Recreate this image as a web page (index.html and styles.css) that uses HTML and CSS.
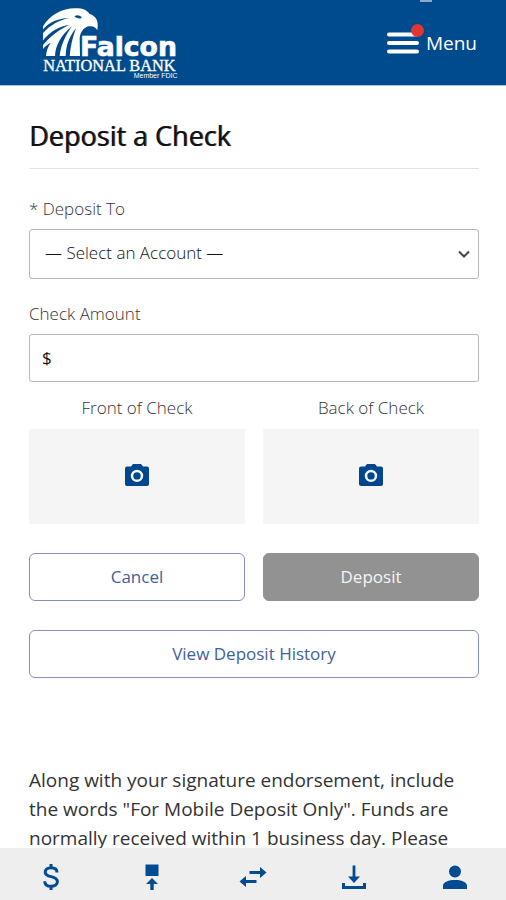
FILE: index.html
```html
<!DOCTYPE html>
<html lang="en">
<head>
<meta charset="utf-8">
<meta name="viewport" content="width=device-width, initial-scale=1">
<title>Deposit a Check</title>
<link rel="stylesheet" href="styles.css">
</head>
<body>
<div class="app">
  <header class="topbar">
    <svg class="logo" viewBox="36 18 411 219" role="img" aria-label="Falcon National Bank">
      <path class="logo-fill" d="M39 76C58 42 100 20 140 22C158 22 170 27 178 38C198 44 207 60 202 88C196 77 188 74 176 76C162 80 151 92 149 112L150 165L48 165C49 150 54 137 62 126C53 130 46 136 39 144Z"/>
      <path class="logo-cut" d="M37 88C56 64 82 52 118 51C90 57 62 70 37 98ZM37 121C60 90 88 75 120 71C92 83 64 102 37 134ZM75 166C76 134 92 104 126 76C106 104 92 134 89 166ZM107 166C108 132 118 106 138 82C128 108 121 138 119 166ZM133 46C142 40 152 44 156 51C148 54 139 52 133 46Z"/>
      <text class="logo-name" x="150" y="164">Falcon</text>
      <text class="logo-bank" x="40" y="209">NATIONAL BANK</text>
      <text class="logo-fdic" x="311" y="231">Member FDIC</text>
    </svg>
    <span class="top-mark" aria-hidden="true"></span>
    <button class="menu" type="button">
      <span class="menu-icon">
        <svg viewBox="0 0 32 22" aria-hidden="true"><path d="M2 2.500H30M2 11H30M2 19.500H30"/></svg>
        <span class="menu-dot"></span>
      </span>
      Menu
    </button>
  </header>

  <main class="content">
    <h1>Deposit a Check</h1>
    <form class="form">
      <label class="label" for="account">* Deposit To</label>
      <div class="select-wrap">
        <select id="account"><option>— Select an Account —</option></select>
        <svg class="chevron" viewBox="0 0 12 8" aria-hidden="true"><path d="M1 1.500L6 6.500L11 1.500"/></svg>
      </div>
      <label class="label" for="amount">Check Amount</label>
      <div class="amount">
        <span>$</span>
        <input id="amount" type="text" inputmode="decimal">
      </div>
      <div class="pair photos">
        <div class="photo">
          <span id="front">Front of Check</span>
          <button type="button" aria-labelledby="front">
            <svg viewBox="0 0 24 22" aria-hidden="true"><path fill-rule="evenodd" d="M8 0H16L18 2.500H22Q24 2.500 24 4.500V20Q24 22 22 22H2Q0 22 0 20V4.500Q0 2.500 2 2.500H6ZM12 5.700A6.200 6.200 0 1 0 12 18.100A6.200 6.200 0 1 0 12 5.700ZM12 8.200A3.700 3.700 0 1 1 12 15.600A3.700 3.700 0 1 1 12 8.200Z"/></svg>
          </button>
        </div>
        <div class="photo">
          <span id="back">Back of Check</span>
          <button type="button" aria-labelledby="back">
            <svg viewBox="0 0 24 22" aria-hidden="true"><path fill-rule="evenodd" d="M8 0H16L18 2.500H22Q24 2.500 24 4.500V20Q24 22 22 22H2Q0 22 0 20V4.500Q0 2.500 2 2.500H6ZM12 5.700A6.200 6.200 0 1 0 12 18.100A6.200 6.200 0 1 0 12 5.700ZM12 8.200A3.700 3.700 0 1 1 12 15.600A3.700 3.700 0 1 1 12 8.200Z"/></svg>
          </button>
        </div>
      </div>
      <div class="pair actions">
        <button class="btn" type="button">Cancel</button>
        <button class="btn btn-muted" type="button">Deposit</button>
      </div>
      <button class="btn" type="button">View Deposit History</button>
    </form>
    <p class="note">Along with your signature endorsement, include the words "For Mobile Deposit Only". Funds are normally received within 1 business day. Please</p>
  </main>

  <nav class="tabs" aria-label="Main">
    <a href="#accounts" aria-label="Accounts"><svg viewBox="0 0 28 28"><path class="line" d="M14 1V5M14 23V27M20 9.500C20 6.500 17.500 4.800 14 4.800C10.500 4.800 8.200 6.600 8.200 9.200C8.200 15.300 20.400 12 20.400 18.600C20.400 21.500 17.800 23.300 14 23.300C10.200 23.300 7.800 21.300 7.700 18.200"/></svg></a>
    <a href="#deposit" aria-label="Deposit"><svg viewBox="0 0 28 28"><path d="M7.500 1.500H20.500V13H7.500ZM14 15L20 21H15.700V27H12.300V21H8Z"/></svg></a>
    <a href="#transfer" aria-label="Transfer"><svg viewBox="0 0 28 28"><path d="M10.500 8H21V4L27.500 9.500L21 15V11H10.500ZM17.500 17H7V13L.5 18.500L7 24V20H17.500Z"/></svg></a>
    <a href="#download" aria-label="Download"><svg viewBox="0 0 28 28"><path d="M12.600 2.500H15.400V13.500H20L14 20L8 13.500H12.600ZM2 20H5V23H23V20H26V26H2Z"/></svg></a>
    <a href="#profile" aria-label="Profile"><svg viewBox="0 0 28 28"><path d="M14 2.500A6 6 0 1 1 14 14.500A6 6 0 1 1 14 2.500ZM2 26V22.500C2 19 8 17 14 17S26 19 26 22.500V26Z"/></svg></a>
  </nav>
</div>
</body>
</html>
```
FILE: styles.css
```css
* { box-sizing: border-box; }

body {
  margin: 0;
  background: #fff;
  color: #333;
  font: 17px/24px "Open Sans", "Noto Sans", sans-serif;
}

button, input, select { font: inherit; color: inherit; }

button { cursor: pointer; }

.app {
  display: flex;
  flex-direction: column;
  height: 100vh;
}

.topbar {
  position: relative;
  display: flex;
  flex: none;
  align-items: center;
  justify-content: space-between;
  height: 86px;
  padding: 1px 29px 0 42px;
  background: #004b8d;
  border-bottom: 1px solid #b4bfd8;
}

.logo { width: 137px; height: 73px; }
.logo-fill, .logo text { fill: #fff; }
.logo-cut { fill: #004b8d; }
.logo-name { font: bold 80px "DejaVu Sans", Verdana, sans-serif; stroke: #fff; stroke-width: 2px; }
.logo-bank { font: 49px "Liberation Serif", serif; stroke: #fff; stroke-width: 1px; }
.logo-fdic { font: 21px "Liberation Sans", Arial, sans-serif; }

.top-mark {
  position: absolute;
  top: 0;
  right: 74px;
  width: 12px;
  height: 2px;
  background: #8fa9cb;
}

.menu {
  display: flex;
  align-items: center;
  gap: 7px;
  padding: 0;
  border: 0;
  background: none;
  color: #fff;
  font-size: 19px;
}

.menu-icon { position: relative; display: flex; }
.menu-icon svg { width: 32px; height: 22px; fill: none; stroke: #fff; stroke-width: 4; stroke-linecap: round; }

.menu-dot {
  position: absolute;
  top: -8px;
  right: -5px;
  width: 13px;
  height: 13px;
  border-radius: 50%;
  background: #e03530;
}

.content {
  flex: 1;
  min-height: 0;
  overflow: hidden;
  padding: 32px 27px 0 29px;
}

h1 {
  margin: 0 0 28px;
  padding-bottom: 14px;
  border-bottom: 1px solid #e2e2e2;
  color: #111;
  font-size: 27px;
  font-weight: 400;
  line-height: 36px;
  text-shadow: 1px 0 #555;
}

.form { display: flex; flex-direction: column; }

.label, .photo span { color: #333; font-weight: 300; }
.label { margin-bottom: 8px; }

.select-wrap { position: relative; display: flex; margin-bottom: 23px; }

select {
  flex: 1;
  height: 50px;
  padding: 0 32px 2px 15px;
  appearance: none;
  border: 1px solid #b8b8b8;
  border-radius: 3px;
  background: #fff;
  color: #111;
  font-weight: 300;
}

.chevron {
  position: absolute;
  top: 21px;
  right: 9px;
  width: 12px;
  height: 8px;
  fill: none;
  stroke: #444;
  stroke-width: 2;
  pointer-events: none;
}

.amount {
  display: flex;
  align-items: center;
  gap: 8px;
  height: 48px;
  padding: 0 12px;
  border: 1px solid #b8b8b8;
  border-radius: 3px;
  color: #111;
}

.amount input { flex: 1; min-width: 0; border: 0; outline: 0; background: none; }

.pair { display: grid; grid-template-columns: 1fr 1fr; gap: 18px; }
.photos { margin-top: 14px; }
.photo { display: flex; flex-direction: column; gap: 9px; text-align: center; }

.photo button {
  display: grid;
  place-items: center;
  height: 95px;
  padding: 0 0 3px;
  border: 0;
  background: #f5f5f5;
}

.photo svg { width: 24px; height: 22px; fill: #00468f; }
.actions { margin: 29px 0; }

.btn {
  height: 48px;
  padding: 0 16px;
  border: 1px solid #8590bd;
  border-radius: 6px;
  background: #fff;
  color: #3f5f9c;
}

.btn-muted { border-color: #929292; background: #929292; color: #f4f4f4; }

.note {
  margin: 88px 0 0;
  font-size: 19px;
  line-height: 29px;
}

.tabs {
  display: flex;
  flex: none;
  justify-content: space-around;
  align-items: center;
  height: 52px;
  padding-top: 6px;
  background: #eee;
}

.tabs a { display: flex; }
.tabs svg { width: 28px; height: 28px; fill: #004b91; }
.tabs .line { fill: none; stroke: #004b91; stroke-width: 3; }
```
